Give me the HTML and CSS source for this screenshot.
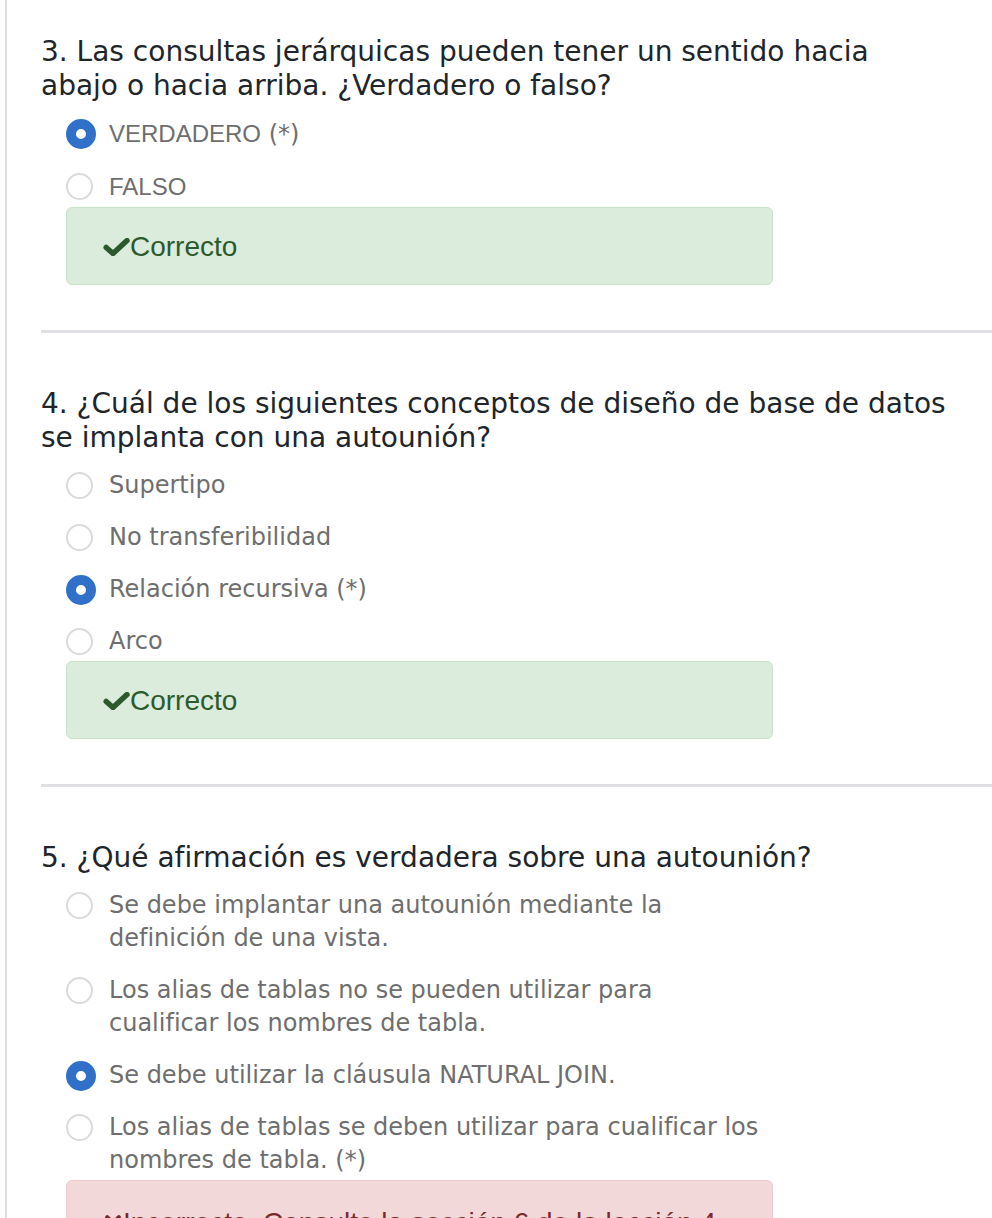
FILE: index.html
```html
<!DOCTYPE html>
<html lang="es">
<head>
<meta charset="utf-8">
<title>Prueba</title>
<link rel="stylesheet" href="styles.css">
</head>
<body>
<div class="page">

  <section class="question">
    <h2 class="q-title">3. Las consultas jerárquicas pueden tener un sentido hacia abajo o hacia arriba. ¿Verdadero o falso?</h2>
    <ul class="options">
      <li class="option"><span class="radio checked"></span><span class="opt-text"><span class="caps">VERDADERO</span> (*)</span></li>
      <li class="option"><span class="radio"></span><span class="opt-text"><span class="caps">FALSO</span></span></li>
    </ul>
    <div class="feedback ok">
      <svg class="fb-icon" viewBox="0 0 27 18" aria-hidden="true"><path d="M3.2 9.4 L10 15.6 L24 2.6" fill="none" stroke="currentColor" stroke-width="5.4" stroke-linejoin="round" stroke-linecap="round"/></svg>
      <span>Correcto</span>
    </div>
  </section>

  <hr class="divider">

  <section class="question">
    <h2 class="q-title">4. ¿Cuál de los siguientes conceptos de diseño de base de datos se implanta con una autounión?</h2>
    <ul class="options">
      <li class="option"><span class="radio"></span><span class="opt-text">Supertipo</span></li>
      <li class="option"><span class="radio"></span><span class="opt-text">No transferibilidad</span></li>
      <li class="option"><span class="radio checked"></span><span class="opt-text">Relación recursiva (*)</span></li>
      <li class="option"><span class="radio"></span><span class="opt-text">Arco</span></li>
    </ul>
    <div class="feedback ok">
      <svg class="fb-icon" viewBox="0 0 27 18" aria-hidden="true"><path d="M3.2 9.4 L10 15.6 L24 2.6" fill="none" stroke="currentColor" stroke-width="5.4" stroke-linejoin="round" stroke-linecap="round"/></svg>
      <span>Correcto</span>
    </div>
  </section>

  <hr class="divider">

  <section class="question">
    <h2 class="q-title">5. ¿Qué afirmación es verdadera sobre una autounión?</h2>
    <ul class="options">
      <li class="option"><span class="radio"></span><span class="opt-text">Se debe implantar una autounión mediante la definición de una vista.</span></li>
      <li class="option"><span class="radio"></span><span class="opt-text">Los alias de tablas no se pueden utilizar para cualificar los nombres de tabla.</span></li>
      <li class="option"><span class="radio checked"></span><span class="opt-text">Se debe utilizar la cláusula NATURAL JOIN.</span></li>
      <li class="option"><span class="radio"></span><span class="opt-text">Los alias de tablas se deben utilizar para cualificar los nombres de tabla. (*)</span></li>
    </ul>
    <div class="feedback bad">
      <svg class="fb-icon" viewBox="0 0 24 24" aria-hidden="true"><path d="M5 5 L19 19 M19 5 L5 19" fill="none" stroke="currentColor" stroke-width="5" stroke-linecap="round"/></svg>
      <span>Incorrecto. Consulte la sección 6 de la lección 4.</span>
    </div>
  </section>

</div>
</body>
</html>
```

FILE: styles.css
```css
html, body {
  margin: 0;
  padding: 0;
  background: #ffffff;
}

body {
  font-family: "DejaVu Sans", Verdana, sans-serif;
}

.page {
  margin-left: 5px;
  border-left: 2px solid #dedede;
  padding: 35px 0 200px 34px;
  min-height: 1400px;
}

.question {
  display: flex;
  flex-direction: column;
}

.q-title {
  margin: 0;
  padding-right: 42px;
  font-weight: normal;
  font-size: 28px;
  line-height: 34px;
  color: #20252a;
}

.options {
  list-style: none;
  margin: 14px 0 0 25px;
  padding: 0 10px 0 0;
  width: 697px;
  display: flex;
  flex-direction: column;
  gap: 19px;
}

.option {
  display: flex;
  align-items: flex-start;
  gap: 13px;
}

.radio {
  flex: 0 0 30px;
  height: 33px;
  display: flex;
  align-items: center;
  justify-content: flex-start;
}

.radio::before {
  content: "";
  box-sizing: border-box;
  width: 27px;
  height: 27px;
  border-radius: 50%;
  border: 2px solid #dadada;
  background: #ffffff;
}

.radio.checked::before {
  width: 30px;
  height: 30px;
  border: 10px solid #3070c9;
  background: #ffffff;
}

.opt-text {
  font-size: 24px;
  line-height: 33px;
  color: #6e6e6e;
}

.caps {
  font-family: "Liberation Sans", Arial, sans-serif;
}

.feedback {
  box-sizing: border-box;
  margin: 3px 0 0 25px;
  width: 707px;
  height: 78px;
  border-radius: 6px;
  display: flex;
  align-items: center;
  padding: 2px 0 0 36px;
  font-family: "Liberation Sans", Arial, sans-serif;
  font-size: 28px;
}

.feedback.ok {
  background: #dbebdc;
  border: 1px solid #c8e3ca;
  color: #2c5a2d;
}

.feedback.bad {
  background: #f3d8da;
  border: 1px solid #ecc9ce;
  color: #7a2a2c;
  padding-top: 8px;
}

.fb-icon {
  width: 27px;
  height: 18px;
  flex: 0 0 auto;
}

.feedback.bad .fb-icon {
  width: 20px;
  height: 20px;
}

.divider {
  margin: 45px 0 54px 0;
  border: 0;
  height: 3px;
  background: #dfe1e5;
}
```
